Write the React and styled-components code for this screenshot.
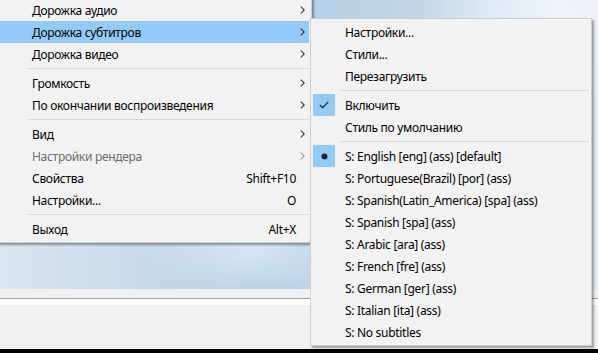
import styled, { createGlobalStyle } from "styled-components";

const GlobalStyle = createGlobalStyle`
  body {
    margin: 0;
    overflow: hidden;
    font-family: "Noto Sans", "Liberation Sans", sans-serif;
  }
`;

const Screen = styled.div`
  position: relative;
  width: 598px;
  height: 353px;
  overflow: hidden;
  display: flex;
  flex-direction: column;
`;
const Sky = styled.div`
  height: 289px;
  background: radial-gradient(
      ellipse 110px 50px at 250px 250px,
      rgba(230, 238, 247, 0.7),
      rgba(230, 238, 247, 0)
    ),
    radial-gradient(
      ellipse 140px 120px at 560px 10px,
      rgba(240, 245, 250, 0.9),
      rgba(240, 245, 250, 0)
    ),
    linear-gradient(
      90deg,
      #d9e4ef 0%,
      #c9dbeb 22%,
      #b3cfe6 42%,
      #b9d3e8 62%,
      #d2e0ed 85%,
      #e2eaf2 100%
    );
`;
const Band = styled.div`
  height: ${(p) => p.h}px;
  background: ${(p) => p.bg};
`;

const Menu = styled.div`
  position: absolute;
  left: ${(p) => p.x}px;
  top: ${(p) => p.y}px;
  width: ${(p) => p.w}px;
  box-sizing: border-box;
  padding: 2px;
  background: #f2f2f2;
  border: 1px solid #cccccc;
  box-shadow: 2px 2px 2px rgba(0, 0, 0, 0.35);
  font-size: 12px;
  letter-spacing: -0.3px;
  color: #000;
`;
const Row = styled.div`
  height: 22px;
  display: grid;
  grid-template-columns: 22px 1fr auto 13px;
  column-gap: 10px;
  align-items: center;
  background: ${(p) => (p.active ? "#91c9f7" : "transparent")};
  color: ${(p) => (p.disabled ? "#6d6d6d" : "#000")};
  white-space: nowrap;
`;
const Mark = styled.div`
  width: 22px;
  height: 22px;
  display: flex;
  align-items: center;
  justify-content: center;
  background: ${(p) => (p.on ? "#91c9f7" : "transparent")};
`;
const Label = styled.span``;
const Shortcut = styled.span`
  text-align: right;
  margin-right: -10px;
`;
const Arrow = styled.div`
  display: flex;
  align-items: center;
  justify-content: center;
`;
const Separator = styled.div`
  height: 7px;
  display: flex;
  align-items: center;
  margin-left: 28px;
  &::after {
    content: "";
    flex: 1;
    height: 1px;
    background: #d7d7d7;
  }
`;

const Chevron = ({ dim }) => (
  <svg width="5" height="8" viewBox="0 0 5 8">
    <path
      d="M0.8 0.6 L4.2 4 L0.8 7.4"
      fill="none"
      stroke={dim ? "#a0a0a0" : "#333"}
      strokeWidth="1.1"
    />
  </svg>
);

const Check = () => (
  <svg width="10" height="8" viewBox="0 0 10 8">
    <path d="M0.8 4 L3.6 6.8 L9.2 1" fill="none" stroke="#333" strokeWidth="1.3" />
  </svg>
);

const Bullet = () => (
  <svg width="7" height="7" viewBox="0 0 7 7">
    <circle cx="3.5" cy="3.5" r="3" fill="#222" />
  </svg>
);

const mainItems = [
  { label: "Дорожка аудио", sub: true },
  { label: "Дорожка субтитров", sub: true, active: true },
  { label: "Дорожка видео", sub: true },
  "sep",
  { label: "Громкость", sub: true },
  { label: "По окончании воспроизведения", sub: true },
  "sep",
  { label: "Вид", sub: true },
  { label: "Настройки рендера", sub: true, disabled: true },
  { label: "Свойства", key: "Shift+F10" },
  { label: "Настройки...", key: "O" },
  "sep",
  { label: "Выход", key: "Alt+X" },
];

const subItems = [
  { label: "Настройки..." },
  { label: "Стили..." },
  { label: "Перезагрузить" },
  "sep",
  { label: "Включить", mark: "check" },
  { label: "Стиль по умолчанию" },
  "sep",
  { label: "S: English [eng] (ass) [default]", mark: "dot" },
  { label: "S: Portuguese(Brazil) [por] (ass)" },
  { label: "S: Spanish(Latin_America) [spa] (ass)" },
  { label: "S: Spanish [spa] (ass)" },
  { label: "S: Arabic [ara] (ass)" },
  { label: "S: French [fre] (ass)" },
  { label: "S: German [ger] (ass)" },
  { label: "S: Italian [ita] (ass)" },
  { label: "S: No subtitles" },
];

const renderItems = (items) =>
  items.map((it, i) =>
    it === "sep" ? (
      <Separator key={i} />
    ) : (
      <Row key={i} active={it.active} disabled={it.disabled}>
        <Mark on={!!it.mark}>
          {it.mark === "check" && <Check />}
          {it.mark === "dot" && <Bullet />}
        </Mark>
        <Label>{it.label}</Label>
        <Shortcut>{it.key}</Shortcut>
        <Arrow>{it.sub && <Chevron dim={it.disabled} />}</Arrow>
      </Row>
    )
  );

export default function App() {
  return (
    <>
      <GlobalStyle />
      <Screen>
        <Sky />
        <Band h={9} bg="#f0f0f0" />
        <Band h={1} bg="#a0a0a0" />
        <Band h={6} bg="#ffffff" />
        <Band h={44} bg="#f0f0f0" />
        <Band h={4} bg="#000000" />
        <Menu x={-3} y={-4} w={315}>
          {renderItems(mainItems)}
        </Menu>
        <Menu x={310} y={18} w={282}>
          {renderItems(subItems)}
        </Menu>
      </Screen>
    </>
  );
}
